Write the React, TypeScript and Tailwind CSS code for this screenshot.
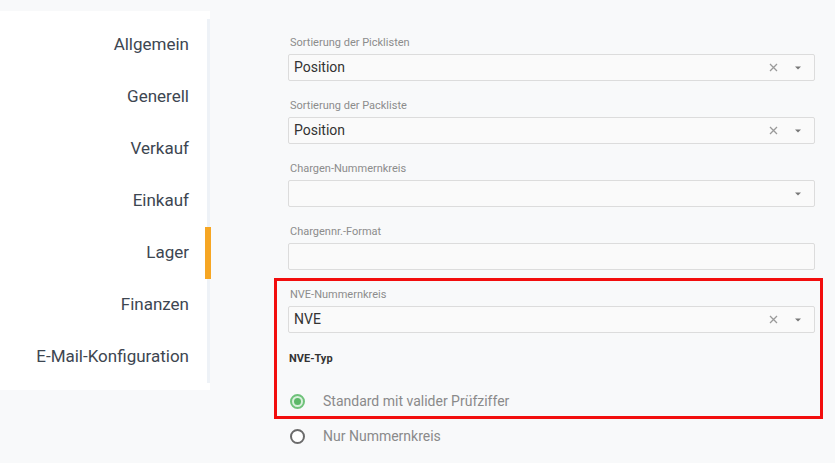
import React from 'react';

const navItems = ['Allgemein', 'Generell', 'Verkauf', 'Einkauf', 'Lager', 'Finanzen', 'E-Mail-Konfiguration'];

type Field = { label: string; value?: string; kind: 'select' | 'text'; clearable?: boolean };

const fields: Field[] = [
  { label: 'Sortierung der Picklisten', value: 'Position', kind: 'select', clearable: true },
  { label: 'Sortierung der Packliste', value: 'Position', kind: 'select', clearable: true },
  { label: 'Chargen-Nummernkreis', kind: 'select' },
  { label: 'Chargennr.-Format', kind: 'text' },
  { label: 'NVE-Nummernkreis', value: 'NVE', kind: 'select', clearable: true },
];

function ClearIcon() {
  return (
    <svg width="9" height="9" viewBox="0 0 9 9" className="text-[#9a9a9a]">
      <path d="M1 1L8 8M8 1L1 8" stroke="currentColor" strokeWidth="1.3" />
    </svg>
  );
}

function Caret() {
  return (
    <svg width="6" height="4" viewBox="0 0 6 4" className="text-[#777]">
      <path d="M0 0.5H6L3 3.5Z" fill="currentColor" />
    </svg>
  );
}

function FieldRow({ field }: { field: Field }) {
  return (
    <div className="flex flex-col">
      <span className="text-[11px] leading-[14px] text-[#8c8c8c] mb-[4px] pl-[2px]">{field.label}</span>
      <div className="h-[27px] border border-[#dcdcdc] rounded-[2px] bg-[#fafafa] flex items-center pl-[5px] pr-[13px]">
        <span className="flex-1 text-[14px] text-[#333]">{field.value}</span>
        {field.clearable && (
          <span className="mr-[17px] flex items-center">
            <ClearIcon />
          </span>
        )}
        {field.kind === 'select' && <Caret />}
      </div>
    </div>
  );
}

function Radio({ checked, label }: { checked?: boolean; label: string }) {
  return (
    <div className="flex items-center h-[20px]">
      <span
        className={
          checked
            ? 'w-[15px] h-[15px] rounded-full border-[2px] border-[#6fc27a] bg-[#d9f0dc] flex items-center justify-center ml-[2px]'
            : 'w-[15px] h-[15px] rounded-full border-[2px] border-[#6b6b6b] bg-white ml-[2px]'
        }
      >
        {checked && <span className="w-[7px] h-[7px] rounded-full bg-[#5cb868]" />}
      </span>
      <span className="ml-[18px] text-[14px] text-[#8a8a8a]">{label}</span>
    </div>
  );
}

export default function App() {
  return (
    <div className="w-[835px] h-[463px] bg-[#f8f9fa] flex overflow-hidden" style={{ fontFamily: 'Roboto, "Liberation Sans", sans-serif' }}>
      {/* Sidebar */}
      <div className="w-[210px] h-[379px] mt-[11px] bg-white shrink-0 pt-[8px]">
        <nav className="border-r-[3px] border-[#eef2f7] flex flex-col">
          {navItems.map((item) => (
            <div key={item} className="relative h-[52px] flex items-center justify-end pr-[18px]">
              <span className="text-[17px] text-[#3d4651]">{item}</span>
              {item === 'Lager' && <span className="absolute right-[-4px] top-0 w-[6px] h-[52px] bg-[#f6a623]" />}
            </div>
          ))}
        </nav>
      </div>

      {/* Content */}
      <div className="relative flex-1 pl-[78px] pr-[20px] pt-[36px]">
        <div className="flex flex-col gap-[18px]">
          {fields.map((f) => (
            <FieldRow key={f.label} field={f} />
          ))}
        </div>
        <div className="mt-[18px] pl-[1px] text-[11px] font-bold text-[#333]">NVE-Typ</div>
        <div className="mt-[24px] flex flex-col gap-[15px]">
          <Radio checked label="Standard mit valider Prüfziffer" />
          <Radio label="Nur Nummernkreis" />
        </div>

        {/* annotation */}
        <div className="absolute left-[64px] top-[278px] w-[549px] h-[141px] border-[3px] border-[#f20d0d] pointer-events-none" />
      </div>
    </div>
  );
}
